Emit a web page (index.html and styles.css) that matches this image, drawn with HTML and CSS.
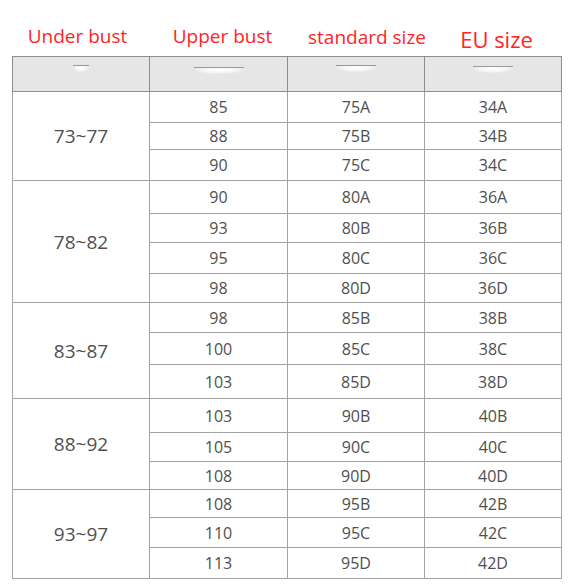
FILE: index.html
```html
<!DOCTYPE html>
<html>
<head>
<meta charset="utf-8">
<link rel="stylesheet" href="styles.css">
</head>
<body>
<div class="page">
  <div class="labels">
    <div class="lab lab1">Under bust</div>
    <div class="lab lab2">Upper bust</div>
    <div class="lab lab3">standard size</div>
    <div class="lab lab4">EU size</div>
  </div>
  <table class="chart">
    <colgroup>
      <col class="c1"><col class="c2"><col class="c3"><col class="c4">
    </colgroup>
    <tr class="head">
      <td><span class="smudge s1"></span></td>
      <td><span class="smudge s2"></span></td>
      <td><span class="smudge s3"></span></td>
      <td><span class="smudge s4"></span></td>
    </tr>
    <tr class="h31"><td rowspan="3" class="range">73~77</td><td>85</td><td>75A</td><td>34A</td></tr>
    <tr class="h27"><td>88</td><td>75B</td><td>34B</td></tr>
    <tr class="h31"><td>90</td><td>75C</td><td>34C</td></tr>

    <tr class="h33"><td rowspan="4" class="range">78~82</td><td>90</td><td>80A</td><td>36A</td></tr>
    <tr class="h29"><td>93</td><td>80B</td><td>36B</td></tr>
    <tr class="h31"><td>95</td><td>80C</td><td>36C</td></tr>
    <tr class="h29"><td>98</td><td>80D</td><td>36D</td></tr>

    <tr class="h30"><td rowspan="3" class="range">83~87</td><td>98</td><td>85B</td><td>38B</td></tr>
    <tr class="h32"><td>100</td><td>85C</td><td>38C</td></tr>
    <tr class="h34"><td>103</td><td>85D</td><td>38D</td></tr>

    <tr class="h34"><td rowspan="3" class="range">88~92</td><td>103</td><td>90B</td><td>40B</td></tr>
    <tr class="h29"><td>105</td><td>90C</td><td>40C</td></tr>
    <tr class="h28"><td>108</td><td>90D</td><td>40D</td></tr>

    <tr class="h28"><td rowspan="3" class="range">93~97</td><td>108</td><td>95B</td><td>42B</td></tr>
    <tr class="h30"><td>110</td><td>95C</td><td>42C</td></tr>
    <tr class="h31"><td>113</td><td>95D</td><td>42D</td></tr>
  </table>
</div>
</body>
</html>
```
FILE: styles.css
```css
html, body {
  margin: 0;
  padding: 0;
  background: #ffffff;
}
.page {
  width: 581px;
  height: 588px;
  padding-left: 12px;
  box-sizing: border-box;
  font-family: "Open Sans", "Noto Sans", sans-serif;
}
.labels {
  display: grid;
  grid-template-columns: 137px 138px 137px 137px;
  height: 56px;
  align-items: end;
  color: #ff2424;
}
.lab {
  text-align: center;
  font-size: 19px;
  line-height: 19px;
  white-space: nowrap;
}
.lab1 { padding-right: 6px; margin-bottom: 10px; }
.lab2 { padding-left: 9px; margin-bottom: 10px; }
.lab3 { padding-left: 21px; margin-bottom: 9px; }
.lab4 { padding-left: 8px; font-size: 22px; line-height: 22px; margin-bottom: 6px; }

.chart {
  border-collapse: collapse;
  table-layout: fixed;
  width: 550px;
  color: #505050;
  font-size: 16px;
}
.c1 { width: 137px; }
.c2 { width: 138px; }
.c3 { width: 137px; }
.c4 { width: 137px; }
.chart td {
  border: 1px solid #a3a3a3;
  text-align: center;
  vertical-align: middle;
  padding: 0;
  line-height: 18px;
}
.chart td.range {
  font-size: 19px;
}
.head td {
  background: #e6e6e6;
  border-color: #8e8e8e;
  height: 34px;
  vertical-align: top;
}
.h27 td { height: 26px; }
.h28 td { height: 27px; }
.h29 td { height: 28px; }
.h30 td { height: 29px; }
.h31 td { height: 30px; }
.h32 td { height: 31px; }
.h33 td { height: 32px; }
.h34 td { height: 33px; }
.chart td.range { height: auto; }

.smudge {
  display: block;
  margin: 8px auto 0;
  height: 6px;
  border-top: 1px solid #9a9a9a;
  background: radial-gradient(ellipse at 50% 30%, #ffffff 0%, #f6f6f6 45%, rgba(230,230,230,0) 75%);
}
.s1 { width: 16px; }
.s2 { width: 50px; margin-top: 10px; }
.s3 { width: 40px; }
.s4 { width: 40px; margin-top: 9px; }
```
